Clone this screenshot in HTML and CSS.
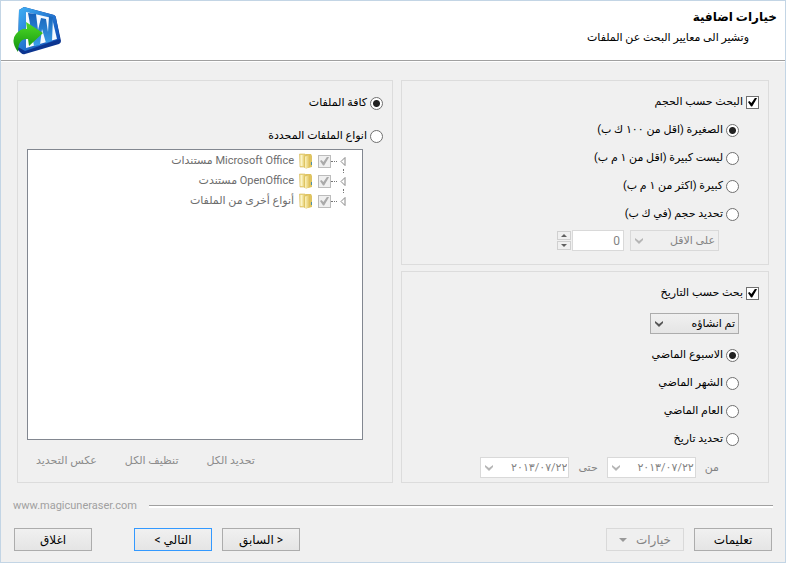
FILE: index.html
```html
<!DOCTYPE html>
<html lang="ar" dir="rtl">
<head>
  <meta charset="UTF-8">
  <title>خيارات اضافية</title>
  <link rel="stylesheet" href="styles.css">
</head>
<body>
  <svg width="0" height="0" class="defs">
    <linearGradient id="gold" x1="0" x2="1">
      <stop offset="0" stop-color="#fbf3c0"/>
      <stop offset="1" stop-color="#dcbc50"/>
    </linearGradient>
    <symbol id="chevron" viewBox="0 0 8 6">
      <path d="M0 0v2l4 4 4-4V0L4 3z"/>
    </symbol>
    <symbol id="folder" viewBox="0 0 14 16">
      <path d="M.5 1h5.500v13H1z" fill="#ecd987" stroke="#d6b857" stroke-width=".6"/>
      <path d="M1.500 2h2v11h-2z" fill="#fbf4c8"/>
      <path d="M5 3.500L6.500 1H12l1 2v11l-6 1.500-2-1z" fill="#dfc462"/>
      <path d="M6 3.500L11 2v12l-4 1.500-1-1z" fill="url(#gold)"/>
      <path d="M12 9h1v3h-1z" fill="#4b90a8"/>
    </symbol>
  </svg>

  <header class="header">
    <div class="titles">
      <h1>خيارات اضافية</h1>
      <p>وتشير الى معايير البحث عن الملفات</p>
    </div>
    <svg class="logo" width="50" height="50" viewBox="0 0 50 50" aria-hidden="true">
      <defs>
        <linearGradient id="blue" x1="0" y1="0" x2="1" y2="1">
          <stop offset="0" stop-color="#3fb0f5"/>
          <stop offset="1" stop-color="#0a3fae"/>
        </linearGradient>
        <linearGradient id="letter" x1="0" y1="0" x2="0" y2="1">
          <stop offset="0" stop-color="#1560b8"/>
          <stop offset="1" stop-color="#3a9fe8"/>
        </linearGradient>
        <linearGradient id="green" x1="0" y1="0" x2="0" y2="1">
          <stop offset="0" stop-color="#4fdc26"/>
          <stop offset="1" stop-color="#119010"/>
        </linearGradient>
      </defs>
      <path d="M6 3l5-3 30 8q2 1 2 3l5 23q0 2-2 3L12 47q-2 1-4-1l-3-3z" fill="#0c3590"/>
      <path d="M6 3l5-3 30 8q2 1 2 3l4 21-35 12-7-4z" fill="url(#blue)"/>
      <path d="M13 5l26 6 5 21-31 9z" fill="#f4f9ff"/>
      <path d="M15 6l8 1 2 16 3-12 5 1 2 13 1-16 4 1-1 24-6 2-4-14-2 16-6 1z" fill="url(#letter)"/>
      <path d="M5 45Q-3 34 3 27q5-6 11-5l-1-7 17 11-14 13-1-7q-10-1-10 13z" fill="url(#green)"/>
    </svg>
  </header>

  <main class="panels">
    <div class="column">
      <section class="panel size">
        <label class="option"><input type="checkbox" checked>البحث حسب الحجم</label>
        <div class="group">
          <label class="option"><input type="radio" name="size" checked>الصغيرة (اقل من ١٠٠ ك ب)</label>
          <label class="option"><input type="radio" name="size">ليست كبيرة (اقل من ١ م ب)</label>
          <label class="option"><input type="radio" name="size">كبيرة (اكثر من ١ م ب)</label>
          <label class="option"><input type="radio" name="size">تحديد حجم (في ك ب)</label>
          <div class="fields">
            <div class="combo disabled">
              <select aria-label="تحديد حجم" disabled><option>على الاقل</option></select>
              <svg width="8" height="6"><use href="#chevron"/></svg>
            </div>
            <div class="spinner">
              <input type="text" value="0" aria-label="ك ب" disabled>
              <div class="steps">
                <button type="button" aria-label="+" disabled><svg width="6" height="3"><path d="M3 0l3 3H0z"/></svg></button>
                <button type="button" aria-label="-" disabled><svg width="6" height="3"><path d="M0 0h6L3 3z"/></svg></button>
              </div>
            </div>
          </div>
        </div>
      </section>

      <section class="panel date">
        <label class="option"><input type="checkbox" checked>بحث حسب التاريخ</label>
        <div class="group">
          <div class="combo">
            <select aria-label="بحث حسب التاريخ"><option>تم انشاؤه</option></select>
            <svg width="8" height="6"><use href="#chevron"/></svg>
          </div>
          <label class="option"><input type="radio" name="date" checked>الاسبوع الماضي</label>
          <label class="option"><input type="radio" name="date">الشهر الماضي</label>
          <label class="option"><input type="radio" name="date">العام الماضي</label>
          <label class="option"><input type="radio" name="date">تحديد تاريخ</label>
          <div class="fields">
            <label for="from">من</label>
            <div class="combo picker disabled">
              <select id="from" disabled><option>٢٠١٣/٠٧/٢٢</option></select>
              <svg width="8" height="6"><use href="#chevron"/></svg>
            </div>
            <label for="to">حتى</label>
            <div class="combo picker disabled">
              <select id="to" disabled><option>٢٠١٣/٠٧/٢٢</option></select>
              <svg width="8" height="6"><use href="#chevron"/></svg>
            </div>
          </div>
        </div>
      </section>
    </div>

    <section class="panel files">
      <label class="option"><input type="radio" name="files" checked>كافة الملفات</label>
      <label class="option"><input type="radio" name="files">انواع الملفات المحددة</label>
      <ul class="tree">
        <li>
          <svg class="arrow" width="6" height="9"><path d="M5 .5v8L1 4.500z"/></svg>
          <label><input type="checkbox" checked disabled><svg width="14" height="16"><use href="#folder"/></svg><span>Microsoft Office مستندات</span></label>
        </li>
        <li>
          <svg class="arrow" width="6" height="9"><path d="M5 .5v8L1 4.500z"/></svg>
          <label><input type="checkbox" checked disabled><svg width="14" height="16"><use href="#folder"/></svg><span>OpenOffice مستندت</span></label>
        </li>
        <li>
          <svg class="arrow" width="6" height="9"><path d="M5 .5v8L1 4.500z"/></svg>
          <label><input type="checkbox" checked disabled><svg width="14" height="16"><use href="#folder"/></svg><span>أنواع أخرى من الملفات</span></label>
        </li>
      </ul>
      <div class="links">
        <button type="button" disabled>تحديد الكل</button>
        <button type="button" disabled>تنظيف الكل</button>
        <button type="button" disabled>عكس التحديد</button>
      </div>
    </section>
  </main>

  <footer class="footer">
    <div class="site"><a href="#">www.magicuneraser.com</a></div>
    <div class="buttons">
      <button type="button" class="btn">تعليمات</button>
      <button type="button" class="btn" disabled>خيارات <svg width="8" height="4"><path d="M0 0h8L4 4z"/></svg></button>
      <span class="space"></span>
      <button type="button" class="btn">&lt; السابق</button>
      <button type="button" class="btn next">التالي &gt;</button>
      <button type="button" class="btn close">اغلاق</button>
    </div>
  </footer>
</body>
</html>
```
FILE: styles.css
```css
* {
  box-sizing: border-box;
}
body {
  margin: 0;
  min-height: 100vh;
  display: flex;
  flex-direction: column;
  border: 1px solid #c3d5e5;
  background-color: #f0f0f0;
  color: #000;
  font-family: Roboto, "DejaVu Sans", sans-serif;
  font-size: 11px;
  line-height: 16px;
}
button, input, select {
  font: inherit;
  color: inherit;
  margin: 0;
}
.defs {
  position: absolute;
}

/* header */
.header {
  display: flex;
  justify-content: space-between;
  height: 60px;
  padding: 6px 8px 0 12px;
  background-color: #fff;
  border-bottom: 1px solid #a0a0a0;
  box-shadow: 0 1px #fff;
}
h1 {
  margin: 2px 0 5px;
  font-size: 12px;
  line-height: 16px;
}
.titles p {
  margin: 0 28px 0 0;
}

/* panels */
.panels {
  flex: 1;
  display: grid;
  grid-template-columns: 368fr 376fr;
  gap: 8px;
  padding: 19px 16px 0;
}
.column {
  display: flex;
  flex-direction: column;
  gap: 6px;
}
.panel {
  border: 1px solid #dcdcdc;
  padding: 7px 9px 4px;
}
.size {
  padding-bottom: 13px;
}
.date {
  flex: 1;
}
.group {
  padding-right: 20px;
}
.option {
  display: flex;
  align-items: center;
  gap: 3px;
  height: 28px;
}
input[type="checkbox"], input[type="radio"] {
  appearance: none;
  width: 13px;
  height: 13px;
  flex: none;
  border: 1px solid #707070;
  background-color: #fff;
}
input[type="radio"] {
  border-radius: 50%;
}
input[type="radio"]:checked {
  background-image: radial-gradient(circle, #222 3px, transparent 4px);
}
input[type="checkbox"] {
  display: grid;
  place-content: center;
}
input[type="checkbox"]:checked::before {
  content: "";
  width: 9px;
  height: 9px;
  background-color: #000;
  clip-path: polygon(0 50%, 15% 38%, 38% 62%, 80% 0, 100% 8%, 46% 100%, 34% 100%);
}

/* fields */
.fields {
  display: flex;
  align-items: center;
  gap: 6px;
  color: #838383;
}
.size .fields {
  margin-top: 2px;
  padding-right: 20px;
}
.date .fields {
  margin-top: 4px;
  padding-right: 20px;
  gap: 9px;
}
.combo {
  position: relative;
  width: 89px;
  height: 21px;
}
.date .group > .combo {
  margin: 6px 0 7px;
}
.combo select {
  appearance: none;
  width: 100%;
  height: 100%;
  padding: 0 3px;
  border: 1px solid #acacac;
  border-radius: 0;
  background: linear-gradient(#f0f0f0, #e5e5e5);
}
.combo svg {
  position: absolute;
  left: 5px;
  top: 8px;
  fill: #555;
  pointer-events: none;
}
.combo.disabled select {
  border-color: #d9d9d9;
  background: #efefef;
  color: #838383;
  opacity: 1;
}
.disabled svg {
  fill: #b5b5b5;
}
.combo.picker select {
  padding: 0 1px;
  background: #fff;
}
.spinner {
  display: flex;
  gap: 1px;
}
.spinner input {
  width: 52px;
  height: 21px;
  padding: 0 3px;
  border: 1px solid #d9d9d9;
  background-color: #fff;
  font-size: 12px;
  text-align: right;
}
.steps {
  display: flex;
  flex-direction: column;
  gap: 1px;
  padding-top: 1px;
}
.steps button {
  display: flex;
  align-items: center;
  justify-content: center;
  width: 14px;
  height: 9px;
  padding: 0;
  border: 1px solid #d0d0d0;
  background-color: #f0f0f0;
  fill: #606060;
}

/* file types */
.files {
  display: flex;
  flex-direction: column;
  padding: 8px 9px 0;
}
.files > .option + .option {
  margin-top: 5px;
}
.tree {
  flex: 1;
  margin: -1px 20px 0 0;
  padding: 1px 16px 0 0;
  border: 1px solid #828790;
  background-color: #fff;
  list-style: none;
  color: #6d6d6d;
}
.tree li {
  position: relative;
  display: flex;
  align-items: center;
  height: 20px;
}
.tree li + li::before {
  content: "";
  position: absolute;
  right: 2px;
  top: -2px;
  height: 4px;
  border-right: 1px dotted #777;
}
.arrow {
  fill: #fff;
  stroke: #888;
}
.tree label {
  display: flex;
  align-items: center;
  gap: 5px;
}
.tree label::before {
  content: "";
  width: 6px;
  margin: 0 3px 0 -5px;
  border-top: 1px dotted #777;
}
.tree input[type="checkbox"] {
  border-color: #bcbcbc;
  background-color: #efefef;
}
.tree input[type="checkbox"]::before {
  background-color: #aaa;
}
.links {
  display: flex;
  justify-content: flex-end;
  align-items: center;
  gap: 28px;
  height: 42px;
  padding-left: 9px;
}
.links button {
  padding: 0;
  border: 0;
  background: none;
  color: #8c8c8c;
}

/* footer */
.footer {
  padding: 14px 12px 11px;
}
.site {
  display: flex;
  align-items: center;
  flex-direction: row-reverse;
  gap: 12px;
  height: 18px;
}
.site a {
  color: #a0a0a0;
  text-decoration: none;
}
.site::before {
  content: "";
  order: 1;
  flex: 1;
  height: 2px;
  border-top: 1px solid #a0a0a0;
  background-color: #fff;
}
.buttons {
  display: flex;
  gap: 10px;
  margin-top: 13px;
  padding: 0 1px;
}
.btn {
  width: 78px;
  height: 23px;
  padding: 0;
  border: 1px solid #acacac;
  background: linear-gradient(#f0f0f0, #e5e5e5);
  font-size: 12px;
}
.btn:disabled {
  border-color: #d9d9d9;
  background: #efefef;
  color: #838383;
  fill: #999;
}
.btn svg {
  margin: 0 6px 2px 0;
}
.next {
  border-color: #3399ff;
}
.close {
  margin-right: 32px;
}
.space {
  flex: 1;
}
```
